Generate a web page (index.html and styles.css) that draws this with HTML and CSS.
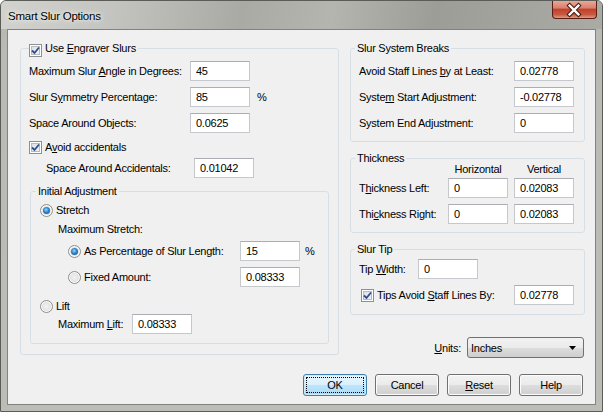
FILE: index.html
```html
<!DOCTYPE html>
<html lang="en">
<head>
<meta charset="UTF-8">
<title>Smart Slur Options</title>
<link rel="stylesheet" href="styles.css">
</head>
<body>
<div class="window">
    <div class="titlebar">
        <span class="title">Smart Slur Options</span>
        <span class="close">
            <svg width="45" height="18" viewBox="0 0 45 18">
                <path d="M18 4.5 L27 13.5 M27 4.5 L18 13.5" stroke="#4a1d14" stroke-width="4.6" stroke-linecap="square"/>
                <path d="M18 4.5 L27 13.5 M27 4.5 L18 13.5" stroke="#fff" stroke-width="2.4" stroke-linecap="square"/>
            </svg>
        </span>
    </div>
    <div class="client">
        <div class="main">
            <!-- left side: engraver slurs -->
            <fieldset class="group group-left">
                <legend class="legend-check"><span class="check"><svg width="9" height="9" viewBox="0 0 9 9"><path d="M1 4.5 L3.5 7 L8 1.5" fill="none" stroke="#2d4d8f" stroke-width="1.8"/></svg></span>Use <u>E</u>ngraver Slurs</legend>
                <div class="row mt6"><span class="lbl" style="width:161px">Maximum Slur <u>A</u>ngle in Degrees:</span><input class="field" value="45"></div>
                <div class="row mt6"><span class="lbl" style="width:161px">Slur S<u>y</u>mmetry Percentage:</span><input class="field" value="85"><span class="unit">%</span></div>
                <div class="row mt6"><span class="lbl" style="width:161px">Space Around Objects:</span><input class="field" value="0.0625"></div>
                <div class="row mt4"><span class="check"><svg width="9" height="9" viewBox="0 0 9 9"><path d="M1 4.5 L3.5 7 L8 1.5" fill="none" stroke="#2d4d8f" stroke-width="1.8"/></svg></span><span class="opt">A<u>v</u>oid accidentals</span></div>
                <div class="row mt1 indent17"><span class="lbl" style="width:148px">Space Around Accidentals:</span><input class="field" value="0.01042"></div>

                <fieldset class="group group-inner">
                    <legend>Initial Adjustment</legend>
                    <div class="row short mt5"><span class="radio on"></span><span class="opt">Stretch</span></div>
                    <div class="row short mt5 indent18"><span class="lbl">Maximum Stretch:</span></div>
                    <div class="row mt5 indent28"><span class="radio on"></span><span class="opt" style="width:156px">As Percentage of Slur Length:</span><input class="field" value="15"><span class="unit unit-pct">%</span></div>
                    <div class="row mt6 indent28"><span class="radio"></span><span class="opt" style="width:156px">Fixed Amount:</span><input class="field" value="0.08333"></div>
                    <div class="row short mt12"><span class="radio"></span><span class="opt">Lift</span></div>
                    <div class="row mt1 indent18"><span class="lbl" style="width:74px">Maximum <u>L</u>ift:</span><input class="field" value="0.08333"></div>
                </fieldset>
            </fieldset>

            <!-- right side -->
            <div class="side">
                <fieldset class="group group-breaks">
                    <legend>Slur System Breaks</legend>
                    <div class="row mt6"><span class="lbl" style="width:155px">Avoid Staff Lines <u>b</u>y at Least:</span><input class="field" value="0.02778"></div>
                    <div class="row mt6"><span class="lbl" style="width:155px">Syste<u>m</u> Start Adjustment:</span><input class="field" value="-0.02778"></div>
                    <div class="row mt6"><span class="lbl" style="width:155px">System End Adjustment:</span><input class="field" value="0"></div>
                </fieldset>

                <fieldset class="group group-thick">
                    <legend>Thickness</legend>
                    <div class="heads"><span>Horizontal</span><span>Vertical</span></div>
                    <div class="row mt2"><span class="lbl" style="width:89px">T<u>h</u>ickness Left:</span><input class="field" value="0"><input class="field gap6" value="0.02083"></div>
                    <div class="row mt6"><span class="lbl" style="width:89px">Thi<u>c</u>kness Right:</span><input class="field" value="0"><input class="field gap6" value="0.02083"></div>
                </fieldset>

                <fieldset class="group group-tip">
                    <legend>Slur Tip</legend>
                    <div class="row mt3"><span class="lbl" style="width:59px">Tip <u>W</u>idth:</span><input class="field" value="0"></div>
                    <div class="row mt6 indent2"><span class="check"><svg width="9" height="9" viewBox="0 0 9 9"><path d="M1 4.5 L3.5 7 L8 1.5" fill="none" stroke="#2d4d8f" stroke-width="1.8"/></svg></span><span class="opt" style="width:137px">Tips Avoid <u>S</u>taff Lines By:</span><input class="field" value="0.02778"></div>
                </fieldset>

                <div class="units">
                    <span class="lbl"><u>U</u>nits:</span>
                    <div class="combo"><span>Inches</span><svg width="7" height="4" viewBox="0 0 7 4"><path d="M0 0 H7 L3.5 4 Z" fill="#000"/></svg></div>
                </div>
            </div>
        </div>

        <div class="buttons">
            <button class="btn btn-default"><span class="focus">OK</span></button>
            <button class="btn">Cancel</button>
            <button class="btn"><u>R</u>eset</button>
            <button class="btn">Help</button>
        </div>
    </div>
</div>
</body>
</html>
```

FILE: styles.css
```css
* {
    box-sizing: border-box;
}
body {
    margin: 0;
    font-family: "Liberation Sans", Arial, sans-serif;
    font-size: 11px;
    letter-spacing: -0.25px;
    color: #000;
}
u {
    text-decoration: underline;
    text-underline-offset: 1px;
}
.window {
    width: 603px;
    height: 412px;
    border: 1px solid #5b5b58;
    border-radius: 6px 6px 0 0;
    background: linear-gradient(to bottom, #b3b4ae 0, #b9bab4 40px, #bdbdb8 100%);
    display: flex;
    flex-direction: column;
    overflow: hidden;
}
.titlebar {
    height: 28px;
    display: flex;
    align-items: flex-start;
    background: linear-gradient(100deg, #d2d3cf 0%, #c4c5c0 18%, #a9aaa4 40%, #b4b5af 55%, #9c9d97 72%, #aaaba5 100%);
}
.title {
    padding: 8px 0 0 7px;
    line-height: 14px;
    font-size: 11.5px;
    text-shadow: 0 0 6px #f4f4f2, 0 0 3px #f4f4f2;
}
.close {
    margin-left: auto;
    margin-right: 5px;
    width: 45px;
    height: 18px;
    border: 1px solid #5a1e14;
    border-top: 0;
    border-radius: 0 0 4px 4px;
    background: linear-gradient(to bottom, #e7a898 0, #d9826e 40%, #c3412b 50%, #c85a42 80%, #e19a84 100%);
    display: flex;
}
.close svg {
    margin-left: -1px;
}
.client {
    margin: 0 6px 6px;
    height: 376px;
    border: 1px solid #828280;
    background: #f0f0f0;
    padding: 11px 10px 0 12px;
}
.main {
    display: flex;
    gap: 11px;
    align-items: flex-start;
}
.group {
    margin: 0;
    padding: 0 8px;
    border: 1px solid #d5dfe5;
    border-radius: 3px;
    min-width: 0;
}
.group legend {
    padding: 0 2px;
    margin-left: -4px;
    height: 14px;
    line-height: 14px;
}
.group .legend-check {
    margin-left: 0;
    padding: 0 2px 0 0;
}
.group-left {
    width: 319px;
    height: 314px;
}
.group-inner {
    width: 299px;
    margin: 6px 0 0 1px;
    padding: 0 8px 9px 9px;
}
.side {
    width: 235px;
    display: flex;
    flex-direction: column;
}
.group-breaks {
    padding-bottom: 8px;
}
.group-thick {
    margin-top: 9px;
    padding-bottom: 8px;
}
.group-tip {
    margin-top: 9px;
    padding-bottom: 9px;
}
.row {
    display: flex;
    align-items: center;
    height: 20px;
    white-space: nowrap;
}
.row.short {
    height: 14px;
}
.mt1 { margin-top: 1px; }
.mt2 { margin-top: 2px; }
.mt3 { margin-top: 3px; }
.mt4 { margin-top: 4px; }
.mt5 { margin-top: 5px; }
.mt6 { margin-top: 6px; }
.mt12 { margin-top: 12px; }
.indent2 { padding-left: 2px; }
.indent17 { padding-left: 17px; }
.indent18 { padding-left: 18px; }
.indent28 { padding-left: 28px; }
.lbl {
    flex: none;
}
.opt {
    flex: none;
    margin-left: 3px;
}
.field {
    flex: none;
    width: 60px;
    height: 20px;
    margin: 0;
    padding: 0 0 0 5px;
    border: 1px solid #c5c8cd;
    border-top-color: #abadb3;
    background: #fff;
    font: inherit;
    letter-spacing: inherit;
    color: #000;
    outline: none;
}
.gap6 {
    margin-left: 6px;
}
.unit {
    margin-left: 7px;
}
.unit-pct {
    margin-left: 5px;
}
.check {
    flex: none;
    display: inline-flex;
    align-items: center;
    justify-content: center;
    width: 13px;
    height: 13px;
    border: 1px solid #8e8f8f;
    background: linear-gradient(135deg, #dcdee2 0%, #f4f4f5 100%);
    box-shadow: inset 0 0 0 1px #fff, inset 0 0 0 2px #b6bbc3;
    vertical-align: -3px;
    margin-right: 2px;
}
.legend-check .check {
    margin-right: 3px;
}
.row .check {
    margin-right: 0;
}
.radio {
    flex: none;
    width: 13px;
    height: 13px;
    border-radius: 50%;
    border: 1px solid #8e8f8f;
    background: radial-gradient(circle at 50% 50%, #f4f4f4 0, #dcdcdc 70%, #cfcfcf 100%);
    box-shadow: inset 0 0 0 1px #fff;
    position: relative;
}
.radio.on::after {
    content: "";
    position: absolute;
    left: 2px;
    top: 2px;
    width: 7px;
    height: 7px;
    border-radius: 50%;
    background: radial-gradient(circle at 45% 40%, #9fd8ff 0, #2b84c9 45%, #0d4a85 100%);
}
.heads {
    display: flex;
    gap: 6px;
    padding-left: 89px;
    margin-top: -2px;
    height: 13px;
    line-height: 13px;
}
.heads span {
    width: 60px;
    text-align: center;
}
.units {
    display: flex;
    align-items: center;
    justify-content: flex-end;
    margin-top: 22px;
    margin-right: 1px;
    gap: 6px;
}
.combo {
    width: 117px;
    height: 21px;
    border: 1px solid #707070;
    border-radius: 3px;
    background: linear-gradient(to bottom, #f2f2f2 0, #ebebeb 50%, #dddddd 51%, #cfcfcf 100%);
    display: flex;
    align-items: center;
    justify-content: space-between;
    padding: 0 7px 0 3px;
}
.buttons {
    display: flex;
    justify-content: flex-end;
    gap: 8px;
    margin-top: 16px;
    margin-right: 2px;
}
.btn {
    width: 64px;
    height: 22px;
    padding: 0;
    border: 1px solid #707070;
    border-radius: 3px;
    background: linear-gradient(to bottom, #f2f2f2 0, #ebebeb 50%, #dddddd 51%, #cfcfcf 100%);
    box-shadow: inset 0 0 0 1px #fcfcfc;
    font: inherit;
    letter-spacing: inherit;
    color: #000;
}
.btn-default {
    border-color: #3c7fb1;
    background: linear-gradient(to bottom, #eaf6fd 0, #d9f0fc 50%, #bee6fd 51%, #a7d9f5 100%);
    box-shadow: inset 0 0 0 1px #d0ecfa;
    padding: 2px;
}
.focus {
    display: flex;
    align-items: center;
    justify-content: center;
    height: 100%;
    border: 1px dotted #000;
}
```
